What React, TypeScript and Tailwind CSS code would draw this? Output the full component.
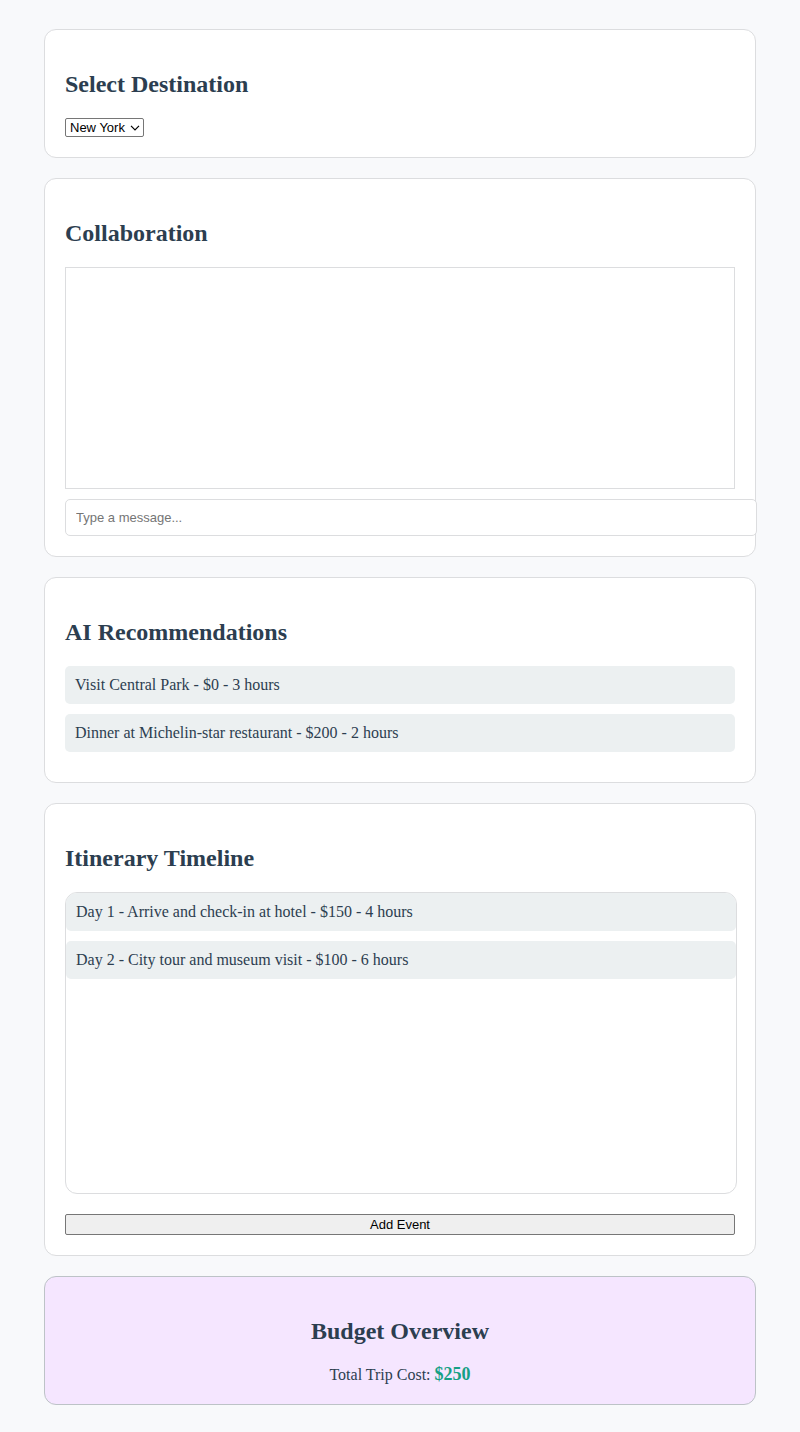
import { useState } from "react";
import type { ReactNode } from "react";

const cities = ["New York", "Paris", "Tokyo"];
const recommendations = [
  "Visit Central Park - $0 - 3 hours",
  "Dinner at Michelin-star restaurant - $200 - 2 hours",
];
const initialEvents = [
  "Day 1 - Arrive and check-in at hotel - $150 - 4 hours",
  "Day 2 - City tour and museum visit - $100 - 6 hours",
];

function Heading({ id, children }: { id?: string; children: ReactNode }) {
  return (
    <h2 id={id} className="my-5 text-2xl leading-7 font-bold">
      {children}
    </h2>
  );
}

function Card({ children }: { children: ReactNode }) {
  return <section className="rounded-xl border border-[#dcdddf] bg-white p-5">{children}</section>;
}

function Item({ children }: { children: ReactNode }) {
  return <li className="mb-2.5 rounded-[5px] bg-[#ecf0f1] p-2.5 leading-[18px]">{children}</li>;
}

export default function App() {
  const [city, setCity] = useState(cities[0]);
  const [events, setEvents] = useState(initialEvents);

  return (
    <div className="min-h-screen bg-[#f8f9fb] font-['Liberation_Serif',serif] text-base text-[#2c3e50]">
      <main className="mx-11 flex flex-col gap-5 pt-[29px] pb-[26px]">
        <Card>
          <Heading id="destination">Select Destination</Heading>
          <div className="relative w-fit">
            <select
              aria-labelledby="destination"
              value={city}
              onChange={(e) => setCity(e.target.value)}
              className="block h-[19px] w-[79px] appearance-none rounded-[2px] border border-[#767676] bg-white pl-1 font-['Liberation_Sans',sans-serif] text-[13px] leading-[17px] text-black"
            >
              {cities.map((c) => (
                <option key={c}>{c}</option>
              ))}
            </select>
            <svg
              aria-hidden="true"
              viewBox="0 0 10 6"
              className="pointer-events-none absolute top-[7px] right-1 h-1.5 w-2.5"
              fill="none"
              stroke="black"
              strokeWidth="1.2"
            >
              <path d="M1 0.8 L5 4.8 L9 0.8" />
            </svg>
          </div>
        </Card>

        <Card>
          <Heading>Collaboration</Heading>
          <div className="mb-2.5 h-[222px] overflow-y-auto border border-[#dcdddf]" />
          <input
            type="text"
            aria-label="Message"
            placeholder="Type a message..."
            className="block h-[37px] w-[calc(100%+22px)] rounded-[5px] border border-[#dcdddf] bg-white px-2.5 font-['Liberation_Sans',sans-serif] text-[13px] text-black placeholder:text-[#757575]"
          />
        </Card>

        <Card>
          <Heading>AI Recommendations</Heading>
          <ul>
            {recommendations.map((r) => (
              <Item key={r}>{r}</Item>
            ))}
          </ul>
        </Card>

        <Card>
          <Heading>Itinerary Timeline</Heading>
          <ul className="h-[302px] w-[calc(100%+2px)] overflow-y-auto rounded-xl border border-[#dcdddf]">
            {events.map((e) => (
              <Item key={e}>{e}</Item>
            ))}
          </ul>
          <button
            type="button"
            onClick={() => setEvents([...events, `Day ${events.length + 1} - Free day - $0 - 0 hours`])}
            className="mt-5 block h-[21px] w-full rounded-[2px] border border-[#767676] bg-[#efefef] font-['Liberation_Sans',sans-serif] text-[13px] leading-[19px] text-black"
          >
            Add Event
          </button>
        </Card>

        <section className="rounded-xl border border-[#bdc3c7] bg-[#f5e6ff] p-5 text-center">
          <Heading>Budget Overview</Heading>
          <p className="leading-[18px]">
            Total Trip Cost: <span className="text-lg leading-[18px] font-bold text-[#16a085]">$250</span>
          </p>
        </section>
      </main>
    </div>
  );
}
